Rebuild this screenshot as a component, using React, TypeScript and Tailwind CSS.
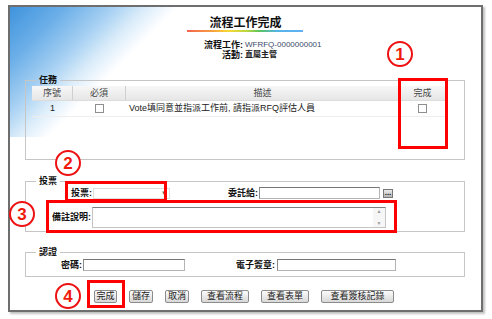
import React from "react";

const font = "font-['Liberation_Sans','Noto_Sans_CJK_TC',sans-serif]";

const Mark = ({ n, className }: { n: string; className: string }) => (
  <div
    className={`absolute w-[26px] h-[26px] rounded-full border-2 border-[#ee1111] bg-white flex items-center justify-center text-[17px] font-bold leading-none text-[#f01a0a] ${className}`}
  >
    {n}
  </div>
);

const Box = ({ className }: { className: string }) => (
  <div className={`absolute border-[3px] border-[#ff0000] ${className}`} />
);

const Input = ({ className }: { className: string }) => (
  <div className={`h-[12px] bg-white border border-[#b4b4b4] border-t-[#777] border-l-[#888] ${className}`} />
);

const Btn = ({ label, w }: { label: string; w: string }) => (
  <div
    className={`${w} h-[13px] flex items-center justify-center rounded-[2px] border border-[#8c8c8c] bg-[linear-gradient(#fbfbfb,#d8d8d8)] text-[9px] leading-none text-[#222]`}
  >
    {label}
  </div>
);

const Legend = ({ children }: { children: React.ReactNode }) => (
  <legend className="ml-[4px] px-[3px] text-[9px] leading-[10px] font-bold text-[#111]">{children}</legend>
);

export default function App() {
  return (
    <div className={`relative w-[492px] h-[319px] bg-white overflow-hidden ${font}`}>
      <div className="ml-[8px] mt-[5px] w-[475px] h-[307px] border-2 border-[#6e6e6e] shadow-[2px_2px_2px_rgba(0,0,0,0.25)] bg-white bg-[linear-gradient(135deg,#3f93dc_0%,#6aaee8_18%,#a4cff2_34%,#dcedfa_46%,#ffffff_56%)] bg-[length:170px_130px] bg-no-repeat">
        {/* title */}
        <div className="pt-[9px] text-center text-[12px] leading-[14px] font-bold text-[#111]">流程工作完成</div>
        <div className="ml-[177px] w-[116px] h-[2px] bg-[linear-gradient(90deg,#f4644f_0%,#f7a040_22%,#f8d834_35%,#b8d640_52%,#5cc45c_62%,#54b4e8_78%,#62b0f4_100%)]" />

        <div className="mt-[8px] ml-[150px] text-[9px] leading-[10px]">
          <div className="flex">
            <span className="w-[83px] text-right font-bold text-[#111]">流程工作:</span>
            <span className="ml-[2px] text-[8px] text-[#3a4a6a]">WFRFQ-0000000001</span>
          </div>
          <div className="flex">
            <span className="w-[83px] text-right font-bold text-[#111]">活動:</span>
            <span className="ml-[2px] text-[8px] font-bold text-[#222]">直屬主管</span>
          </div>
        </div>

        {/* 任務 */}
        <fieldset className="mt-[15px] ml-[15px] w-[440px] h-[85px] border border-[#c6c6c6] pl-[6px]">
          <Legend>任務</Legend>
          <div className="mt-[1px] w-[413px] text-[9px] text-[#444]">
            <div className="flex h-[15px] bg-[linear-gradient(#f7f7f7,#e6e6e6)] border-b border-[#dcdcdc] leading-[15px]">
              <div className="w-[41px] text-center border-r border-[#cfcfcf]">序號</div>
              <div className="w-[53px] text-center border-r border-[#cfcfcf]">必須</div>
              <div className="w-[274px] text-center border-r border-[#cfcfcf]">描述</div>
              <div className="flex-1 text-center">完成</div>
            </div>
            <div className="flex h-[16px] items-center border-b border-[#eeeeee] text-[#222]">
              <div className="w-[41px] text-center">1</div>
              <div className="w-[53px] flex justify-center">
                <div className="w-[9px] h-[9px] border border-[#8e8e8e] bg-white" />
              </div>
              <div className="w-[274px] pl-[3px] whitespace-nowrap">Vote填同意並指派工作前, 請指派RFQ評估人員</div>
              <div className="flex-1 flex justify-center">
                <div className="w-[9px] h-[9px] border border-[#8e8e8e] bg-white" />
              </div>
            </div>
          </div>
        </fieldset>

        {/* 投票 */}
        <fieldset className="mt-[16px] ml-[15px] w-[440px] h-[56px] border border-[#c6c6c6] pl-[6px]">
          <Legend>投票</Legend>
          <div className="mt-[1px] flex items-center text-[9px] font-bold text-[#111] leading-none">
            <span className="w-[60px] text-right">投票:</span>
            <div className="ml-[1px] w-[77px] h-[11px] border border-[#dedede] bg-white flex items-center justify-end pr-[2px] text-[6px] text-[#666]">▼</div>
            <span className="w-[88px] text-right">委託給:</span>
            <Input className="ml-[1px] w-[121px]" />
            <div className="ml-[3px] w-[10px] h-[9px] border border-[#777] bg-[linear-gradient(#ececec,#b4b4b4)] flex items-end justify-center text-[8px] leading-[8px] text-[#111]">...</div>
          </div>
          <div className="mt-[8px] flex items-center text-[9px] font-bold text-[#111] leading-none">
            <span className="w-[59px] text-right">備註說明:</span>
            <div className="ml-[1px] w-[294px] h-[21px] bg-white border border-[#c4c4c4] border-t-[#808080] flex justify-end">
              <div className="w-[12px] h-full bg-[#f6f6f6] flex flex-col items-center justify-between py-[1px] text-[5px] text-[#999]">
                <span>▲</span>
                <span>▼</span>
              </div>
            </div>
          </div>
        </fieldset>

        {/* 認證 */}
        <fieldset className="mt-[15px] ml-[15px] w-[440px] h-[30px] border border-[#c6c6c6] pl-[6px]">
          <Legend>認證</Legend>
          <div className="mt-[2px] flex items-center text-[9px] font-bold text-[#111] leading-none">
            <span className="w-[50px] text-right">密碼:</span>
            <Input className="ml-[1px] w-[102px]" />
            <span className="w-[90px] text-right">電子簽章:</span>
            <Input className="ml-[2px] w-[119px]" />
          </div>
        </fieldset>

        {/* buttons */}
        <div className="mt-[13px] ml-[84px] flex gap-[12px]">
          <Btn label="完成" w="w-[23px]" />
          <Btn label="儲存" w="w-[24px]" />
          <Btn label="取消" w="w-[24px]" />
          <Btn label="查看流程" w="w-[48px]" />
          <Btn label="查看表單" w="w-[48px]" />
          <Btn label="查看簽核記錄" w="w-[73px]" />
        </div>
      </div>

      {/* annotations */}
      <Box className="left-[398px] top-[78px] w-[50px] h-[71px]" />
      <Box className="left-[65px] top-[181px] w-[102px] h-[21px]" />
      <Box className="left-[46px] top-[200px] w-[351px] h-[33px]" />
      <Box className="left-[87px] top-[280px] w-[38px] h-[28px]" />
      <Mark n="1" className="left-[387px] top-[41px]" />
      <Mark n="2" className="left-[55px] top-[150px]" />
      <Mark n="3" className="left-[9px] top-[201px]" />
      <Mark n="4" className="left-[55px] top-[283px]" />
    </div>
  );
}
